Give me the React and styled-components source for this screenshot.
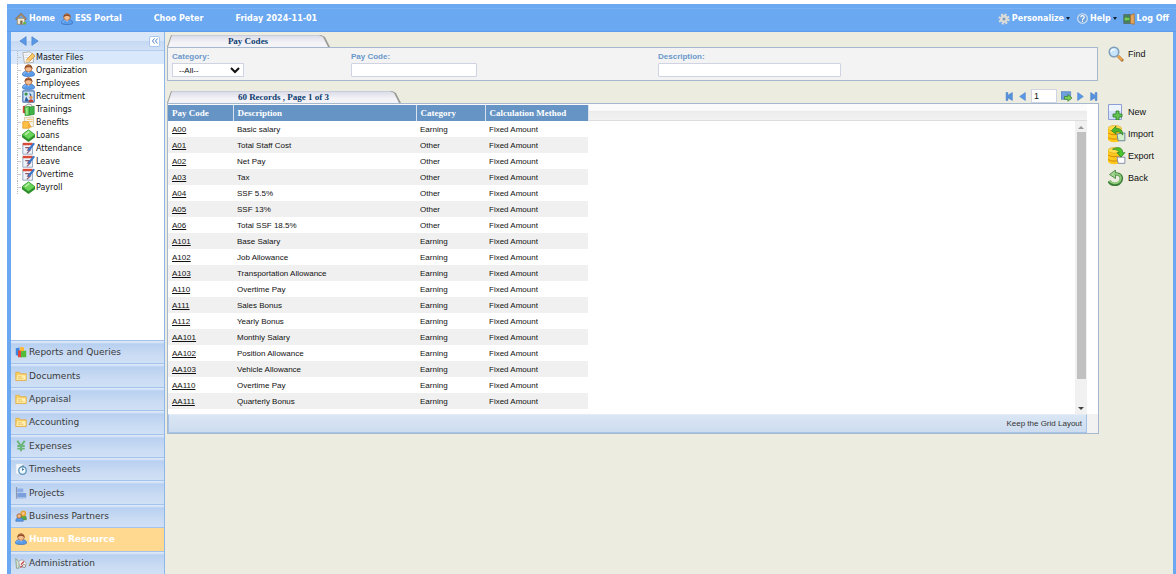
import React, { useState } from "react";
import styled, { createGlobalStyle } from "styled-components";

const GlobalStyle = createGlobalStyle`
  * {
    box-sizing: border-box;
  }
  body {
    margin: 0;
    background: #fff;
    font-family: "Liberation Sans", Arial, sans-serif;
    font-size: 8px;
    color: #111;
  }
  button, input, select {
    font: inherit;
    color: inherit;
  }
  button {
    padding: 0;
    border: 0;
    background: none;
    cursor: pointer;
  }
`;

const Shell = styled.div`
  display: flex;
  flex-direction: column;
  min-height: 100vh;
  padding: 4px 0 0 7px;
`;
const TopBar = styled.header`
  display: flex;
  align-items: center;
  height: 28px;
  padding: 2px 7px 0 8px;
  background: #6aa8f1;
  border-bottom: 1px solid #5b9cec;
  box-shadow: inset 0 4px 0 #6aa8f1, inset 0 5px 0 #79b2f4;
  font-family: "DejaVu Sans", Verdana, sans-serif;
  font-weight: bold;
  color: #fff;
`;
const TopLink = styled.a`
  display: flex;
  align-items: center;
  gap: 2px;
  margin-right: ${(props) => props.$after || 0}px;
  color: #fff;
  text-decoration: none;
  white-space: nowrap;
`;
const TopText = styled.span`
  margin-right: 32px;
  white-space: nowrap;
`;
const Spacer = styled.div`
  flex: 1;
`;
const Caret = styled.span`
  border: 2px solid transparent;
  border-top: 3px solid #123;
  border-bottom: 0;
`;
const Body = styled.div`
  display: flex;
  flex: 1;
  border-left: 4px solid #6aa8f1;
  border-right: 3px solid #6aa8f1;
  background: #ecece0;
`;

const Sidebar = styled.aside`
  display: flex;
  flex-direction: column;
  width: 154px;
  flex-shrink: 0;
  border-right: 1px solid #8db6ec;
  background: #fff;
  font-family: "DejaVu Sans", Verdana, sans-serif;
`;
const SidebarHead = styled.div`
  display: flex;
  align-items: center;
  gap: 2px;
  height: 19px;
  padding: 0 4px 0 7px;
  background: linear-gradient(#dae7f8 50%, #c5d9f3 50%, #d2e1f6);
  border-bottom: 1px solid #b5cdee;
`;
const Collapse = styled.button`
  width: 11px;
  height: 11px;
  display: flex;
  align-items: center;
  justify-content: center;
  background: #fff;
  border: 1px solid #a9c8f0;
  border-radius: 2px;
`;
const Tree = styled.ul`
  flex: 1;
  margin: 0;
  padding: 0;
  list-style: none;
`;
const TreeItem = styled.li`
  background: ${(props) => (props.$selected ? "#d9e8fb" : "none")};
`;
const TreeLink = styled.a`
  display: flex;
  align-items: center;
  height: 13px;
  padding-left: 6px;
  gap: 1px;
  color: #111;
  text-decoration: none;
`;
const Branch = styled.span`
  width: 4px;
  height: 13px;
  border-left: 1px dotted #bbb;
  background: linear-gradient(#ccc, #ccc) 0 6px / 4px 1px no-repeat;
`;
const Accordion = styled.nav`
  display: grid;
  grid-auto-rows: 1fr;
  height: 234px;
`;
const Section = styled.button`
  display: flex;
  align-items: center;
  gap: 2px;
  padding: 0 4px;
  border-top: 1px solid #a3c3ec;
  background: ${(props) => (props.$active ? "#ffd98f" : "linear-gradient(#dce8f8 1px, #b8d0f0 3px, #c9dbf3 60%, #d0e0f5)")};
  color: ${(props) => (props.$active ? "#fff" : "#3a3a3a")};
  font-size: 9px;
  font-weight: ${(props) => (props.$active ? "bold" : "normal")};
  text-align: left;
`;

const Main = styled.main`
  flex: 1;
  min-width: 0;
  padding: 3px 0 0 2px;
`;
const TabRow = styled.div`
  display: flex;
  align-items: flex-end;
  height: 12px;
`;
const Tab = styled.h2`
  width: ${(props) => props.$width}px;
  height: 12px;
  margin: 0;
  background: #9c9c98;
  clip-path: polygon(4px 0, calc(100% - 9px) 0, calc(100% - 5px) 2px, 100% 100%, 0 100%);
  font: bold 9px "Liberation Serif", "Times New Roman", serif;
  color: #0e3d70;
`;
const TabFace = styled.span`
  display: flex;
  align-items: center;
  justify-content: center;
  height: 12px;
  margin: 0 2px 0 1px;
  background: linear-gradient(#c9ccd9 1px, #dddde9 1px, #f4f4f8 8px);
  clip-path: polygon(4px 0, calc(100% - 9px) 0, calc(100% - 5px) 2px, 100% 100%, 0 100%);
`;
const Filters = styled.form`
  display: flex;
  height: 34px;
  margin: 0 1px 10px 0;
  padding: 4px 4px 0;
  background: #f3f3f3;
  border: 1px solid #a6b8ce;
`;
const Field = styled.div`
  display: flex;
  flex-direction: column;
  width: ${(props) => props.$width}px;
`;
const Label = styled.label`
  height: 11px;
  line-height: 10px;
  font-weight: bold;
  color: #6a98cb;
`;
const TextBox = styled.input`
  width: ${(props) => props.$width}px;
  height: 14px;
  padding: 0 3px;
  background: #fff;
  border: 1px solid #d0d3e2;
  border-radius: 1px;
`;
const Select = styled.select`
  width: 72px;
  height: 14px;
  padding: 0 0 0 2px;
  background: #fff;
  border: 1px solid #d0d3e2;
`;
const Pager = styled.div`
  display: flex;
  align-items: center;
  height: 14px;
  margin-left: auto;
  padding-right: 1px;
  gap: 4px;
`;
const PageBox = styled.input`
  width: 26px;
  height: 14px;
  padding: 0 2px;
  border: 1px solid #d0d3e2;
  background: #fff;
  font-size: 9px;
`;

const Grid = styled.section`
  display: grid;
  grid-template-columns: 1fr 11px;
  border: 1px solid #a6b8ce;
  background: #fff;
`;
const GridHead = styled.div`
  height: 17px;
  background: linear-gradient(#fbfbfb 40%, #ececec 45%, #f2f2f2);
  border-bottom: 1px solid #dcdcdc;
`;
const GridBody = styled.div`
  display: flex;
  justify-content: space-between;
  margin-top: -17px;
  padding-top: 1px;
`;
const Table = styled.table`
  width: 420px;
  table-layout: fixed;
  border-collapse: collapse;
`;
const HeadCell = styled.th`
  width: ${(props) => props.$width}px;
  height: 16px;
  padding: 0 4px;
  background: #6694c5;
  border-right: 1px solid #d8e2ee;
  font: bold 9px "Liberation Serif", "Times New Roman", serif;
  color: #fff;
  text-align: left;
`;
const Row = styled.tr`
  &:nth-child(even) {
    background: #f0f0f0;
  }
`;
const Cell = styled.td`
  height: 16px;
  padding: 0 4px;
  white-space: nowrap;
`;
const CodeLink = styled.a`
  color: #111;
`;
const ScrollBar = styled.div`
  display: flex;
  flex-direction: column;
  align-items: center;
  width: 12px;
  margin-top: 16px;
  padding: 5px 0 4px;
  height: 293px;
  background: #f1f1f1;
`;
const Thumb = styled.div`
  width: 9px;
  height: 247px;
  margin: 3px 0 auto;
  background: #c1c1c1;
`;
const ScrollArrow = styled.button`
  border: 3px solid transparent;
  border-${(props) => (props.$up ? "bottom" : "top")}: 3px solid ${(props) => (props.$up ? "#999" : "#444")};
  border-${(props) => (props.$up ? "top" : "bottom")}: 0;
`;
const GridFoot = styled.div`
  display: flex;
  align-items: center;
  justify-content: flex-end;
  height: 19px;
  padding-right: 4px;
  background: linear-gradient(#dae6f4, #cddcef);
  border: 1px solid #a5c4ea;
  border-top-color: #e4ecf6;
`;
const FootCorner = styled.div`
  background: #f2f2f2;
`;
const FootButton = styled.button`
  color: #333;
`;

const Tools = styled.div`
  display: flex;
  flex-direction: column;
  width: 74px;
  flex-shrink: 0;
  padding: 11px 0 0 9px;
  font-size: 9px;
`;
const Tool = styled.button`
  display: flex;
  align-items: center;
  height: 22px;
  margin-bottom: ${(props) => props.$after || 0}px;
`;
const ToolIcon = styled.span`
  width: 20px;
  flex-shrink: 0;
`;

const Svg = styled.svg`
  width: ${(props) => props.$size}px;
  height: ${(props) => props.$size}px;
  display: block;
  flex-shrink: 0;
`;

const drawings = {
  home: (
    <>
      <path d="M3 7h10v8H3z" fill="#f3ead2" stroke="#8b7b56" />
      <path d="M1 8.500 8 1.500l7 7" fill="none" stroke="#8a6a4b" strokeWidth="2.400" />
      <path d="M2 8 8 2l6 6" fill="none" stroke="#dcc9a8" strokeWidth=".8" />
      <path d="M7 10h3v5H7z" fill="#7f6a52" />
      <path d="M11 12h4v3h-4z" fill="#65b44a" />
    </>
  ),
  user: (
    <>
      <path d="M.5 13.500C.5 10 3 8.500 8 8.500s7.500 1.500 7.500 5c-1 2.500-14 2.500-15 0z" fill="#5a9bea" stroke="#2f67b5" strokeWidth=".8" />
      <path d="M2 12.500c1-2 2-2.500 3-2.500" fill="none" stroke="#a9d0fb" />
      <path d="M6 9l2 2.500L10 9z" fill="#fff" />
      <ellipse cx="8" cy="5.500" rx="4.300" ry="4.300" fill="#f6bd8f" stroke="#97572f" strokeWidth=".8" />
      <path d="M3.300 6.500C2 -1.500 14 -1.500 12.700 6.500 12 4.500 10 4 8 4s-4 .5-4.700 2.500z" fill="#94522b" />
      <path d="M5.500 2c1.500-1 3-1 4.500 0" fill="none" stroke="#c4855a" />
    </>
  ),
  users: (
    <>
      <path d="M7 11c0-3 2-4 4-4s4 1 4 4v2H7z" fill="#5ba945" stroke="#39782a" strokeWidth=".8" />
      <circle cx="11" cy="4.500" r="3" fill="#f6bf88" stroke="#e0a12a" strokeWidth="1.800" />
      <path d="M1 15c0-4 2-5 5-5s5 2 5 5z" fill="#5a9bea" stroke="#2f67b5" strokeWidth=".8" />
      <circle cx="5.500" cy="8" r="3" fill="#f3b783" stroke="#9c5a2c" />
    </>
  ),
  pencil: (
    <>
      <path d="M1 2l9-1 4 4v9l-11 1z" fill="#f7f7f7" stroke="#a5a5a5" />
      <path d="M3 5h6M3 8h6" stroke="#d3dae3" />
      <path d="M5 14l1-4 7-7 3 3-7 7z" fill="#ffc96a" stroke="#c98f3a" />
      <path d="M5 14l1-4 3 3z" fill="#f5dfbc" />
    </>
  ),
  recruit: (
    <>
      <rect x="1" y="1" width="14" height="14" rx="1" fill="#cfe2f8" stroke="#4d78b2" strokeWidth="1.500" />
      <circle cx="5" cy="5" r="2" fill="#3f9444" />
      <path d="M9 3l3 3-2 2zM3 14l2-6 4 6z" fill="#345f9d" />
      <circle cx="11" cy="9" r="2" fill="#e09050" />
      <path d="M8 15c0-5 6-5 6 0z" fill="#c23b2d" />
    </>
  ),
  books: (
    <>
      <path d="M1 4l3-1v10l-3-1z" fill="#d9463a" />
      <path d="M3 5l6-1v11l-5 1z" fill="#6ad558" stroke="#277d26" strokeWidth=".8" />
      <path d="M9 5l6-1v10l-6 1z" fill="#3fb548" stroke="#277d26" strokeWidth=".8" />
      <path d="M4 4c3-4 7-3 9 0" fill="none" stroke="#888" strokeWidth="1.200" />
      <path d="M6 6v8" stroke="#c8f5bd" />
    </>
  ),
  gift: (
    <>
      <path d="M3 2l11-1v12H4z" fill="#f4f3ee" stroke="#d4bf93" />
      <path d="M6 4h7M6 7h7" stroke="#f2c671" strokeWidth="1.500" />
      <path d="M1 7h6l2 2v6H1z" fill="#ffc146" stroke="#e09a22" />
      <path d="M7 10c3 0 4 1 5 4H8z" fill="#f4a536" />
    </>
  ),
  money: (
    <>
      <path d="M0 7l8-6 8 6v3l-8 6-8-6z" fill="#2f8e2c" />
      <path d="M0 7l8-6 8 6-8 6z" fill="#6cd35a" stroke="#2f9a2f" strokeWidth=".8" />
      <path d="M4 7l5-4" stroke="#b7f0a6" strokeWidth="2" />
    </>
  ),
  calendar: (
    <>
      <path d="M1 2h12v13H1z" fill="#eef3fb" stroke="#8298b7" />
      <path d="M1 1h12v3H1z" fill="#d84b37" />
      <path d="M4 7h5l-2 3h3l-4 4" fill="none" stroke="#8f5a6a" strokeWidth="1.500" />
      <path d="M8 8l6-7 2 1-6 8-3 1z" fill="#3b76ca" />
    </>
  ),
  chart: (
    <>
      <path d="M1 3l5-1v12l-5-2z" fill="#3d86df" />
      <path d="M4 6l5-1v10H4z" fill="#e1483d" />
      <path d="M7 1l5 1v5H7z" fill="#ffb62e" />
      <path d="M8 7l7-1v9H8z" fill="#53bb3c" />
    </>
  ),
  folder: (
    <>
      <path d="M1 3h5l1 2h8v9H1z" fill="#f9cf62" stroke="#e2a942" />
      <path d="M3 7h11v6H2z" fill="#fff0b5" />
      <path d="M4 9h5M4 11h7" stroke="#e7b748" />
    </>
  ),
  yen: (
    <path d="M3 1l5 7 5-7M8 8v7M3 8h10M3 11.500h10" fill="none" stroke="#6ab577" strokeWidth="2.600" />
  ),
  timer: (
    <>
      <path d="M1 1h9l3 3v11H1z" fill="#f3f8fd" stroke="#c3d4e7" />
      <circle cx="10" cy="10" r="5" fill="#eef7fd" stroke="#6297bd" strokeWidth="1.800" />
      <path d="M10 7v3l2-2M9 4h3" stroke="#46779d" fill="none" strokeWidth="1.300" />
    </>
  ),
  flag: (
    <>
      <path d="M2 0v16" stroke="#8b98b2" strokeWidth="1.500" />
      <path d="M3 2h8v5H3z" fill="#8daee5" />
      <path d="M3 8h12v6H3z" fill="#7b9fdc" />
      <path d="M1 15h14" stroke="#a4bbdf" />
    </>
  ),
  admin: (
    <>
      <path d="M1 2l5 5-1 8H2z" fill="#d7e6d5" stroke="#799277" />
      <path d="M5 6c4-4 8-2 10 3l-2 5-7-2z" fill="#f6f4f4" stroke="#9a9a9a" />
      <path d="M8 10l4-4M7 14l4-3" stroke="#c8433f" strokeWidth="1.600" />
      <circle cx="12" cy="12" r="2" fill="#fff" stroke="#777" />
    </>
  ),
  gear: (
    <>
      <circle cx="8" cy="8" r="6" fill="none" stroke="#dcdcd6" strokeWidth="3" strokeDasharray="2.700 2" />
      <circle cx="8" cy="8" r="4" fill="#c3cbd3" stroke="#dcdcd6" strokeWidth="2.400" />
      <circle cx="8" cy="8" r="1.700" fill="#789abf" />
    </>
  ),
  help: (
    <>
      <circle cx="8" cy="8" r="7" fill="#6ca2dc" stroke="#d7e5f4" strokeWidth="1.600" />
      <path d="M5.500 6c0-3 5-3 5 0 0 2-2.500 2-2.500 4M8 11v2" fill="none" stroke="#fff" strokeWidth="1.700" />
    </>
  ),
  door: (
    <>
      <path d="M1 2h9v12H1z" fill="#457d69" stroke="#58665e" />
      <path d="M10 3l5-2v14l-5-1z" fill="#e3a75c" stroke="#a96c2d" />
      <path d="M1 8l4-4v2h4v4H5v2z" fill="#77ca55" stroke="#367934" strokeWidth=".7" />
    </>
  ),
  find: (
    <>
      <path d="M10 10l5 5" stroke="#a87037" strokeWidth="3" />
      <path d="M10 10l4 4" stroke="#efa84e" strokeWidth="2" />
      <circle cx="6" cy="6" r="4.700" fill="#c7e5fa" stroke="#7e9db9" strokeWidth="1.600" />
      <path d="M3 6c0-2 2-3 4-2" fill="none" stroke="#fff" strokeWidth="1.300" />
    </>
  ),
  add: (
    <>
      <path d="M.5.5h13v15H.5z" fill="#d3e2f8" stroke="#8d9fd5" />
      <path d="M1 1h12v6H1z" fill="#edf4fd" />
      <path d="M8 7h3v3h3v3h-3v3H8v-3H5v-3h3z" fill="#65c452" stroke="#287b28" strokeWidth=".8" />
    </>
  ),
  importDb: (
    <>
      <path d="M0 3v10c2 3 9 3 12 0V3z" fill="#fcc91c" />
      <path d="M0 7c2 2 9 2 12 0M0 11c2 2 9 2 12 0" stroke="#d9920f" fill="none" />
      <ellipse cx="6" cy="3" rx="6" ry="2.500" fill="#ffde4d" stroke="#e0a51c" strokeWidth=".6" />
      <path d="M8 8l7-1v7H9z" fill="#d3f0cb" stroke="#5d7f9b" strokeWidth=".8" />
      <path d="M3 5l4-4v2c5 0 6 2 6 6-2-3-3-3-6-3v2z" fill="#4bb72d" stroke="#237c1e" strokeWidth=".6" />
    </>
  ),
  exportDb: (
    <>
      <path d="M0 3v10c2 3 9 3 12 0V3z" fill="#fcc91c" />
      <path d="M0 7c2 2 9 2 12 0M0 11c2 2 9 2 12 0" stroke="#d9920f" fill="none" />
      <ellipse cx="6" cy="3" rx="6" ry="2.500" fill="#ffde4d" stroke="#e0a51c" strokeWidth=".6" />
      <path d="M8 9h7v5.500H9z" fill="#fff" stroke="#7c84a4" strokeWidth=".8" />
      <path d="M4 2c6-3 9-1 9 3h2l-3.500 4L8 5h2c0-1-2-3-6-3z" fill="#4bc52d" stroke="#237c1e" strokeWidth=".6" />
    </>
  ),
  back: (
    <>
      <path d="M6 4c7-1 9 4 6 8-3 4-9 3-11-1" fill="none" stroke="#3d7d39" strokeWidth="3.400" />
      <path d="M7.500 0v8.500L1.500 4.500z" fill="#a3d493" stroke="#3d7d39" strokeWidth=".8" />
      <path d="M6 4c7-1 8 4 5.500 7.500-3 3-8 2-10-.5" fill="none" stroke="#8ecb79" strokeWidth="1.800" />
    </>
  ),
  prev: <path d="M13 1v14L3 8z" fill="#5b99e6" stroke="#3f7bcb" />,
  next: <path d="M3 1v14l10-7z" fill="#5b99e6" stroke="#3f7bcb" />,
  first: <path d="M2 1h3v5l8-5v14l-8-5v5H2z" fill="#5792dc" stroke="#3f7bcb" />,
  last: <path d="M14 1h-3v5L3 1v14l8-5v5h3z" fill="#5792dc" stroke="#3f7bcb" />,
  go: (
    <>
      <path d="M0 1h14v11H0z" fill="#6d9ede" stroke="#4d7dbc" />
      <path d="M5 8h5V5l6 5-6 5v-3H5z" fill="#7fd053" stroke="#347c2c" />
    </>
  ),
  collapse: <path d="M7 3L3 8l4 5M13 3L9 8l4 5" fill="none" stroke="#4f7fc4" strokeWidth="2" />,
};

const Icon = ({ name, size = 12 }) => (
  <Svg $size={size} viewBox="0 0 16 16" aria-hidden="true">
    {drawings[name]}
  </Svg>
);

const treeItems = [
  ["Master Files", "pencil"],
  ["Organization", "user"],
  ["Employees", "user"],
  ["Recruitment", "recruit"],
  ["Trainings", "books"],
  ["Benefits", "gift"],
  ["Loans", "money"],
  ["Attendance", "calendar"],
  ["Leave", "calendar"],
  ["Overtime", "calendar"],
  ["Payroll", "money"],
];

const sections = [
  ["Reports and Queries", "chart"],
  ["Documents", "folder"],
  ["Appraisal", "folder"],
  ["Accounting", "folder"],
  ["Expenses", "yen"],
  ["Timesheets", "timer"],
  ["Projects", "flag"],
  ["Business Partners", "users"],
  ["Human Resource", "user"],
  ["Administration", "admin"],
];

const payCodes = [
  ["A00", "Basic salary", "Earning"],
  ["A01", "Total Staff Cost", "Other"],
  ["A02", "Net Pay", "Other"],
  ["A03", "Tax", "Other"],
  ["A04", "SSF 5.5%", "Other"],
  ["A05", "SSF 13%", "Other"],
  ["A06", "Total SSF 18.5%", "Other"],
  ["A101", "Base Salary", "Earning"],
  ["A102", "Job Allowance", "Earning"],
  ["A103", "Transportation Allowance", "Earning"],
  ["A110", "Overtime Pay", "Earning"],
  ["A111", "Sales Bonus", "Earning"],
  ["A112", "Yearly Bonus", "Earning"],
  ["AA101", "Monthly Salary", "Earning"],
  ["AA102", "Position Allowance", "Earning"],
  ["AA103", "Vehicle Allowance", "Earning"],
  ["AA110", "Overtime Pay", "Earning"],
  ["AA111", "Quarterly Bonus", "Earning"],
];

const tools = [
  ["Find", "find", 16, 36],
  ["New", "add", 16, 0],
  ["Import", "importDb", 18, 0],
  ["Export", "exportDb", 18, 0],
  ["Back", "back", 16, 0],
];

const App = () => {
  const [selected, setSelected] = useState("Master Files");
  const [active, setActive] = useState("Human Resource");
  const [page, setPage] = useState("1");

  return (
    <Shell>
      <GlobalStyle />
      <TopBar>
        <TopLink href="#home" $after={6}><Icon name="home" />Home</TopLink>
        <TopLink href="#ess" $after={32}><Icon name="user" />ESS Portal</TopLink>
        <TopText>Choo Peter</TopText>
        <TopText>Friday 2024-11-01</TopText>
        <Spacer />
        <TopLink href="#personalize" $after={7}><Icon name="gear" />Personalize<Caret /></TopLink>
        <TopLink href="#help" $after={6}><Icon name="help" size={11} />Help<Caret /></TopLink>
        <TopLink href="#logoff"><Icon name="door" />Log Off</TopLink>
      </TopBar>
      <Body>
        <Sidebar>
          <SidebarHead>
            <button aria-label="Previous"><Icon name="prev" size={10} /></button>
            <button aria-label="Next"><Icon name="next" size={10} /></button>
            <Spacer />
            <Collapse aria-label="Collapse"><Icon name="collapse" size={8} /></Collapse>
          </SidebarHead>
          <Tree>
            {treeItems.map(([label, icon]) => (
              <TreeItem key={label} $selected={label === selected}>
                <TreeLink href="#tree" onClick={() => setSelected(label)}>
                  <Branch />
                  <Icon name={icon} size={13} />
                  {label}
                </TreeLink>
              </TreeItem>
            ))}
          </Tree>
          <Accordion>
            {sections.map(([label, icon]) => (
              <Section key={label} $active={label === active} onClick={() => setActive(label)}>
                <Icon name={icon} />
                {label}
              </Section>
            ))}
          </Accordion>
        </Sidebar>
        <Main>
          <TabRow>
            <Tab $width={163}>
              <TabFace>Pay Codes</TabFace>
            </Tab>
          </TabRow>
          <Filters>
            <Field $width={179}>
              <Label htmlFor="category">Category:</Label>
              <Select id="category">
                <option>--All--</option>
              </Select>
            </Field>
            <Field $width={307}>
              <Label htmlFor="code">Pay Code:</Label>
              <TextBox id="code" $width={126} />
            </Field>
            <Field $width={183}>
              <Label htmlFor="description">Description:</Label>
              <TextBox id="description" $width={183} />
            </Field>
          </Filters>
          <TabRow>
            <Tab $width={234}>
              <TabFace>60 Records , Page 1 of 3</TabFace>
            </Tab>
            <Pager>
              <button aria-label="First page"><Icon name="first" size={9} /></button>
              <button aria-label="Previous page"><Icon name="prev" size={9} /></button>
              <PageBox aria-label="Page" value={page} onChange={(e) => setPage(e.target.value)} />
              <button aria-label="Go to page"><Icon name="go" size={11} /></button>
              <button aria-label="Next page"><Icon name="next" size={9} /></button>
              <button aria-label="Last page"><Icon name="last" size={9} /></button>
            </Pager>
          </TabRow>
          <Grid>
            <div>
              <GridHead />
              <GridBody>
                <div>
                  <Table>
                    <thead>
                      <tr>
                        <HeadCell $width={65}>Pay Code</HeadCell>
                        <HeadCell $width={183}>Description</HeadCell>
                        <HeadCell $width={69}>Category</HeadCell>
                        <HeadCell $width={103}>Calculation Method</HeadCell>
                      </tr>
                    </thead>
                    <tbody>
                      {payCodes.map(([code, description, category]) => (
                        <Row key={code}>
                          <Cell><CodeLink href="#code">{code}</CodeLink></Cell>
                          <Cell>{description}</Cell>
                          <Cell>{category}</Cell>
                          <Cell>Fixed Amount</Cell>
                        </Row>
                      ))}
                    </tbody>
                  </Table>
                </div>
                <ScrollBar>
                  <ScrollArrow $up aria-label="Scroll up" />
                  <Thumb />
                  <ScrollArrow aria-label="Scroll down" />
                </ScrollBar>
              </GridBody>
            </div>
            <div />
            <GridFoot>
              <FootButton>Keep the Grid Layout</FootButton>
            </GridFoot>
            <FootCorner />
          </Grid>
        </Main>
        <Tools>
          {tools.map(([label, icon, size, after]) => (
            <Tool key={label} $after={after}>
              <ToolIcon>
                <Icon name={icon} size={size} />
              </ToolIcon>
              {label}
            </Tool>
          ))}
        </Tools>
      </Body>
    </Shell>
  );
};

export default App;
